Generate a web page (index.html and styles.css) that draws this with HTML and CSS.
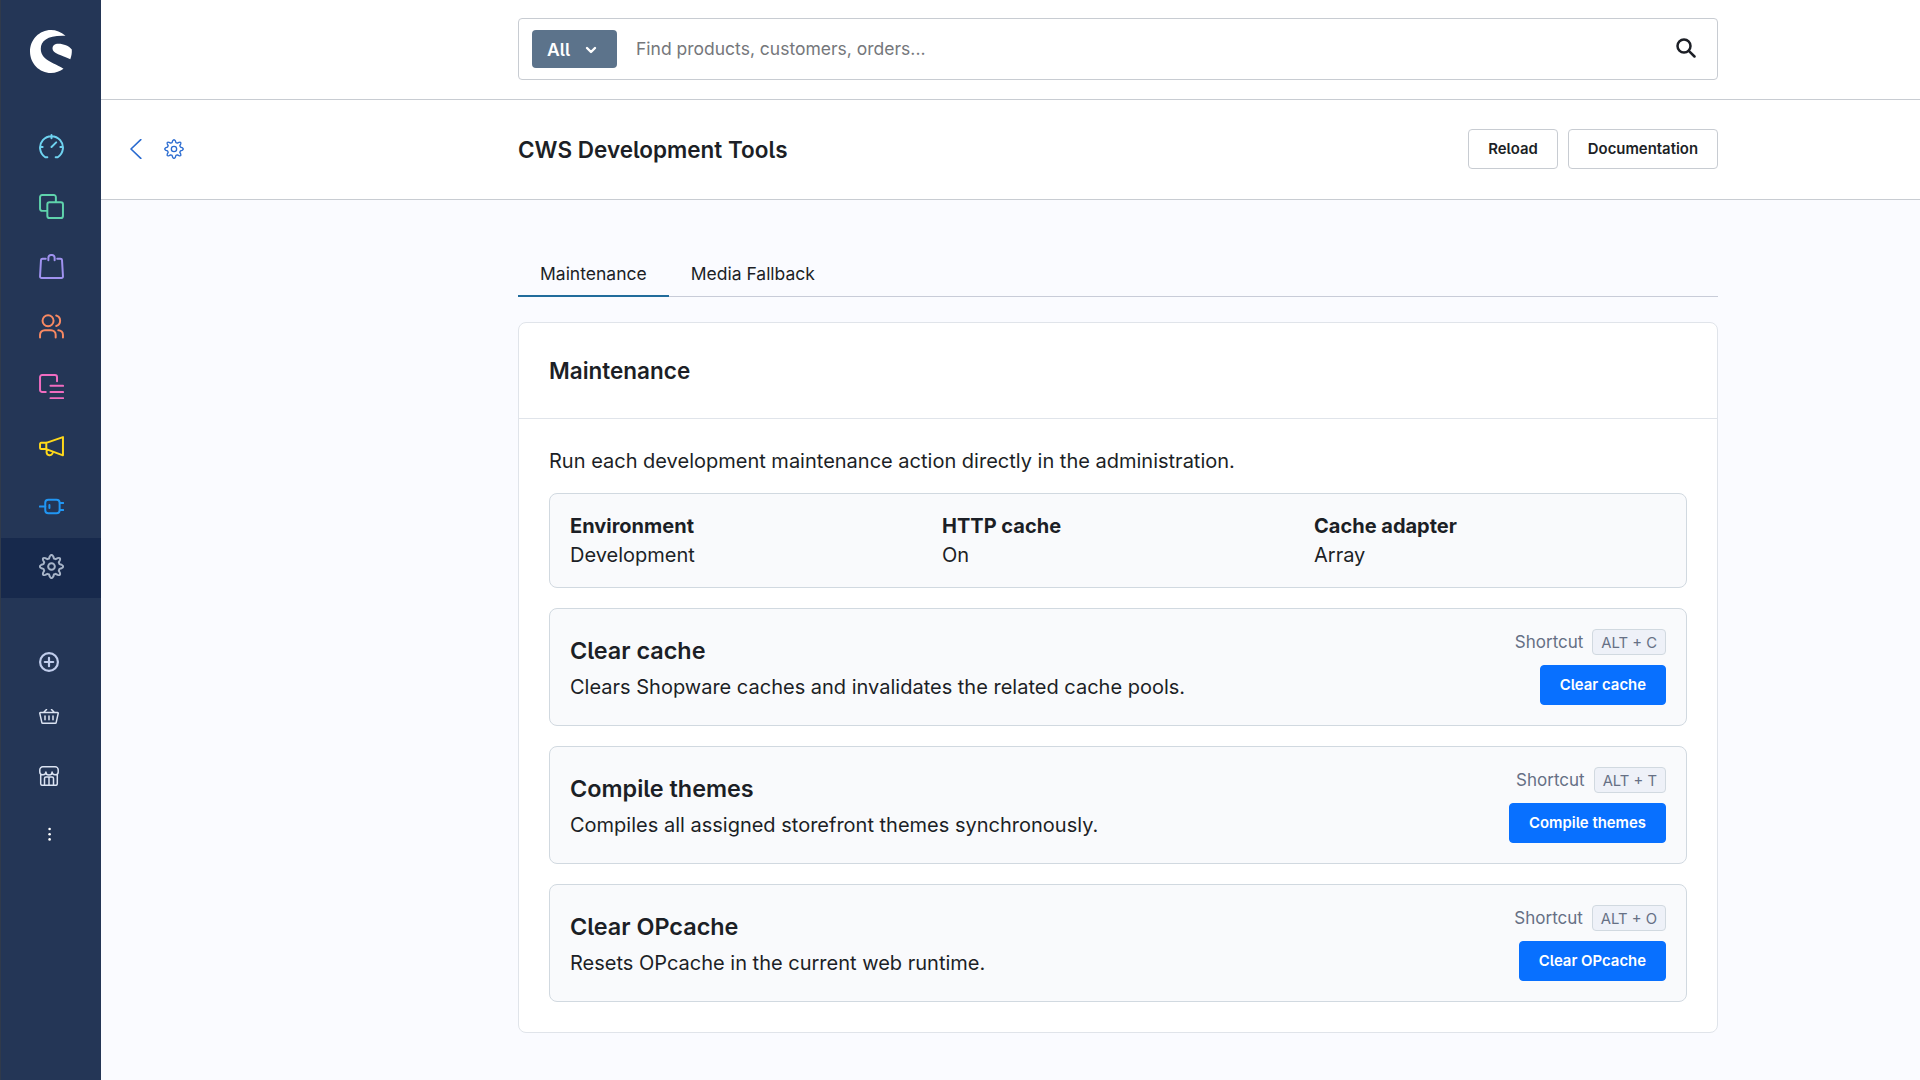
FILE: index.html
```
<!DOCTYPE html>
<html lang="en">
<head>
    <meta charset="UTF-8">
    <title>CWS Development Tools</title>
    <link rel="stylesheet" href="styles.css">
</head>
<body>

<aside class="sidebar">
    <a class="logo" href="#">
        <svg viewBox="0 0 42 43" width="42" height="43">
            <path fill="#fff" d="M35.500 5.800C31 1.800 26 0 21 0 9.500 0 0 9.500 0 21.500S9.500 43 21 43c4.700 0 9-1.500 12.500-4.200C30 36 22 33.500 17 29.800 12.500 26.500 10.800 23 10.800 18.800 10.800 10.500 18 5 35.500 5.800z"/>
            <path fill="#fff" d="M41.800 19.500C39 16 33.500 13.800 28.500 13.800c-4 0-6 2-6 4.700 0 5 9 6.500 17.800 10.700C41.500 26 42 23 41.800 19.500z"/>
        </svg>
    </a>
    <nav class="main-nav">
        <a class="nav-item" href="#">
            <svg class="icon cyan" viewBox="0 0 24 24"><path d="M8 22.300H6A11 11 0 1 1 18 22.300H16M12 1v3M1 12.500h2.500M23 12.500h-2.500M12 12.500l4.500-4.500"/></svg>
        </a>
        <a class="nav-item" href="#">
            <svg class="icon green" viewBox="0 0 24 24"><path d="M7.500 16.200H3a2 2 0 0 1-2-2V3a2 2 0 0 1 2-2h11.200a2 2 0 0 1 2 2v4.500"/><rect x="8" y="8" width="15" height="15" rx="2"/></svg>
        </a>
        <a class="nav-item" href="#">
            <svg class="icon purple" viewBox="0 0 24 24"><path d="M6.500 4.500H3.400a1.500 1.500 0 0 0-1.500 1.400L1 21.400A1.500 1.500 0 0 0 2.500 23h19a1.500 1.500 0 0 0 1.500-1.600l-.9-15.500a1.500 1.500 0 0 0-1.500-1.400H17.500M9 6V3.500A2.500 2.500 0 0 1 11.500 1h1A2.500 2.500 0 0 1 15 3.500V6"/></svg>
        </a>
        <a class="nav-item" href="#">
            <svg class="icon orange" viewBox="0 0 24 24"><circle cx="8.700" cy="6.500" r="5.300"/><path d="M1 22.500V20a4.500 4.500 0 0 1 4.500-4.500h6A4.500 4.500 0 0 1 16 20v2.500M16.500 1.500a5.200 5.200 0 0 1 0 10M18.500 15.500A4.500 4.500 0 0 1 23 20v2.500"/></svg>
        </a>
        <a class="nav-item" href="#">
            <svg class="icon pink" viewBox="0 0 24 24"><path d="M6.500 17.300H3a2 2 0 0 1-2-2V3a2 2 0 0 1 2-2h12.300a2 2 0 0 1 2 2v4M11 11.300H23.200M11 17.300H23.200M11 23.200H23.200"/></svg>
        </a>
        <a class="nav-item" href="#">
            <svg class="icon yellow" viewBox="0 0 24 24"><path d="M1 9.500a1 1 0 0 1 1-1h5v6H2a1 1 0 0 1-1-1zM7 8.500L23 3v17.500L7 14.500M7.300 14.800v3a3 3 0 0 0 5.700.800"/></svg>
        </a>
        <a class="nav-item" href="#">
            <svg class="icon blue" viewBox="0 0 24 24"><path d="M.800 12H6M20 8.700h3.300M20 15.300h3.300M10 10.500v3"/><rect x="6" y="5.500" width="13.800" height="13" rx="3"/></svg>
        </a>
        <a class="nav-item active" href="#">
            <svg class="icon grey" viewBox="0 0 24 24"><use href="#gear"/></svg>
        </a>
    </nav>
    <nav class="extra-nav">
        <a class="extra-item" href="#">
            <svg class="icon-small plus" viewBox="0 0 20 20"><circle cx="10" cy="10" r="8.900"/><path d="M10 5.800v8.400M5.800 10h8.400"/></svg>
        </a>
        <a class="extra-item" href="#">
            <svg class="icon-small" viewBox="0 0 20 20"><path d="M1.500 3.500h17a.700.700 0 0 1 .700.900l-2 9a1 1 0 0 1-1 .900H3.800a1 1 0 0 1-1-.900l-2-9a.700.700 0 0 1 .700-.900zM5 3L7.500.500M15 3L12.500.500M6 7v3.800M10 7v3.800M14 7v3.800"/></svg>
        </a>
        <a class="extra-item" href="#">
            <svg class="icon-small" viewBox="0 0 20 20"><path d="M1.700 8v9.800a1.500 1.500 0 0 0 1.500 1.500h13.600a1.500 1.500 0 0 0 1.500-1.500V8M.800 5.500V3.800A3 3 0 0 1 3.800.800h12.400a3 3 0 0 1 3 3v1.700a3 3 0 0 1-6.100.500 3.100 3.100 0 0 1-6.200 0A3 3 0 0 1 .800 5.500zM5.500 19v-6.500A1.500 1.500 0 0 1 7 11h6a1.500 1.500 0 0 1 1.500 1.500V19M10 11v8"/></svg>
        </a>
        <a class="extra-item" href="#">
            <svg class="icon-small dots" viewBox="0 0 20 20"><circle cx="10.600" cy="6" r="1.300"/><circle cx="10.600" cy="11.200" r="1.300"/><circle cx="10.600" cy="16.400" r="1.300"/></svg>
        </a>
    </nav>
</aside>

<main class="main">
    <header class="search-bar">
        <div class="search">
            <button class="search-type">All
                <svg viewBox="0 0 12 8" width="12" height="8"><path d="M2 2l4 4 4-4"/></svg>
            </button>
            <input class="search-input" type="text" placeholder="Find products, customers, orders...">
            <svg class="search-icon" viewBox="0 0 20 20" width="20" height="20"><circle cx="8" cy="8" r="6.500"/><path d="M12.800 12.800l5.700 5.700"/></svg>
        </div>
    </header>

    <div class="page-head">
        <div class="back">
            <svg viewBox="0 0 12 20" width="12" height="20"><path d="M10.800.600L1 10l9.800 9.400"/></svg>
            <svg class="gear" viewBox="0 0 24 24" width="20" height="20"><use href="#gear"/></svg>
        </div>
        <div class="page-title">
            <h1>CWS Development Tools</h1>
            <div class="page-actions">
                <button class="btn">Reload</button>
                <button class="btn">Documentation</button>
            </div>
        </div>
    </div>

    <div class="content">
        <div class="tabs">
            <a class="tab tab-active" href="#">Maintenance</a>
            <a class="tab" href="#">Media Fallback</a>
        </div>

        <section class="card">
            <div class="card-head">
                <h2>Maintenance</h2>
            </div>
            <div class="card-body">
                <p class="intro">Run each development maintenance action directly in the administration.</p>

                <div class="info">
                    <div class="info-item"><strong>Environment</strong><span>Development</span></div>
                    <div class="info-item"><strong>HTTP cache</strong><span>On</span></div>
                    <div class="info-item"><strong>Cache adapter</strong><span>Array</span></div>
                </div>

                <div class="action">
                    <div class="action-text">
                        <h3>Clear cache</h3>
                        <p>Clears Shopware caches and invalidates the related cache pools.</p>
                    </div>
                    <div class="action-side">
                        <div class="shortcut">Shortcut <kbd>ALT + C</kbd></div>
                        <button class="btn btn-primary">Clear cache</button>
                    </div>
                </div>

                <div class="action">
                    <div class="action-text">
                        <h3>Compile themes</h3>
                        <p>Compiles all assigned storefront themes synchronously.</p>
                    </div>
                    <div class="action-side">
                        <div class="shortcut">Shortcut <kbd>ALT + T</kbd></div>
                        <button class="btn btn-primary">Compile themes</button>
                    </div>
                </div>

                <div class="action">
                    <div class="action-text">
                        <h3>Clear OPcache</h3>
                        <p>Resets OPcache in the current web runtime.</p>
                    </div>
                    <div class="action-side">
                        <div class="shortcut">Shortcut <kbd>ALT + O</kbd></div>
                        <button class="btn btn-primary">Clear OPcache</button>
                    </div>
                </div>
            </div>
        </section>
    </div>
</main>

<svg class="sprite" width="0" height="0">
    <symbol id="gear" viewBox="0 0 24 24">
        <circle cx="12" cy="12" r="3.200"/>
        <path d="M10.300 2.300Q12-.600 13.700 2.300L14.300 4.300 16 5 17.900 4Q21.100 3 20 6.100L19 8 19.700 9.700 21.700 10.300Q24.600 12 21.700 13.700L19.700 14.300 19 16 20 17.900Q21.100 21 17.900 20L16 19 14.300 19.700 13.700 21.700Q12 24.600 10.300 21.700L9.700 19.700 8 19 6.100 20Q2.900 21 4 17.900L5 16 4.300 14.300 2.300 13.700Q-.600 12 2.300 10.300L4.300 9.700 5 8 4 6.100Q2.900 3 6.100 4L8 5 9.700 4.300z"/>
    </symbol>
</svg>

</body>
</html>
```
FILE: styles.css
```
* {
    box-sizing: border-box;
}

body {
    margin: 0;
    height: 1080px;
    display: flex;
    overflow: hidden;
    background: #fafbff;
    color: #1c1f26;
    font-family: Inter, sans-serif;
    font-size: 20px;
    line-height: 24px;
}

h1, h2, h3, p {
    margin: 0;
}

a {
    color: inherit;
    text-decoration: none;
}

svg {
    display: block;
    fill: none;
    stroke-linecap: round;
    stroke-linejoin: round;
}

.sprite {
    position: absolute;
}

.sidebar {
    width: 101px;
    flex: none;
    background: #243656;
    border-left: 1px solid #303a4b;
}

.logo {
    display: block;
    padding: 30px 0 0 29px;
    height: 118px;
}

.logo svg {
    stroke: none;
}

.nav-item {
    display: flex;
    align-items: center;
    justify-content: center;
    height: 60px;
    padding: 0 0 3px 1px;
}

.active {
    background: #17294c;
}

.icon {
    width: 25px;
    height: 25px;
    stroke: currentColor;
    stroke-width: 1.900;
}

.cyan { color: #6fd3f0; }
.green { color: #5fd3ac; }
.purple { color: #a092f0; }
.orange { color: #f88962; }
.pink { color: #f06cc0; }
.yellow { color: #ffd91a; }
.blue { color: #2196f3; }
.grey { color: #a7b4c8; }

.extra-nav {
    padding-top: 35.5px;
}

.extra-item {
    display: flex;
    align-items: center;
    padding-left: 38px;
    height: 57px;
}

.icon-small {
    width: 20px;
    height: 20px;
    stroke: #dbe3f2;
    stroke-width: 1.500;
}

.plus {
    stroke: #c0cdec;
    stroke-width: 2.200;
}

.dots {
    fill: #fff;
    stroke: none;
}

.main {
    flex: 1;
}

.search-bar {
    height: 100px;
    padding: 18px 0 0 417px;
    background: #fff;
    border-bottom: 1px solid #c8ccd2;
}

.search {
    display: flex;
    align-items: center;
    width: 1200px;
    height: 62px;
    padding: 0 21px 0 13px;
    border: 1px solid #c8ccd2;
    border-radius: 4px;
}

.search-type {
    display: flex;
    align-items: center;
    gap: 15px;
    width: 85px;
    height: 38px;
    padding: 0 0 0 15px;
    border: 0;
    border-radius: 4px;
    background: #5c738b;
    color: #fff;
    font: 600 17.5px Inter, sans-serif;
    font-feature-settings: "cv05";
}

.search-type svg {
    margin-top: 2px;
    stroke: #fff;
    stroke-width: 2.400;
}

.search-input {
    flex: 1;
    padding: 0 0 2px 19px;
    border: 0;
    outline: 0;
    font: 400 17.5px Inter, sans-serif;
}

.search-input::placeholder {
    color: #75777b;
}

.search-icon {
    margin-bottom: 3px;
    stroke: #1c1f26;
    stroke-width: 2.500;
}

.page-head {
    display: flex;
    align-items: center;
    height: 100px;
    padding-bottom: 1px;
    background: #fff;
    border-bottom: 1px solid #c8ccd2;
}

.back {
    display: flex;
    align-items: center;
    gap: 22px;
    width: 417px;
    padding-left: 29px;
    stroke: #2a6bd0;
    stroke-width: 1.600;
}

.page-title {
    display: flex;
    align-items: center;
    justify-content: space-between;
    width: 1200px;
}

h1, h2, h3 {
    font-size: 22.5px;
    font-weight: 600;
    line-height: 30px;
    font-feature-settings: "cv05";
}

h1 {
    padding-top: 2px;
}

h3 {
    font-size: 23.4px;
}

.page-actions {
    display: flex;
    gap: 10px;
}

.btn {
    height: 40px;
    padding: 0 19px;
    border: 1px solid #c8ccd2;
    border-radius: 4px;
    background: #fff;
    color: #1c1f26;
    font: 600 14.9px Inter, sans-serif;
    font-feature-settings: "cv05";
}

.btn-primary {
    border-color: #0870ff;
    background: #0870ff;
    color: #fff;
}

.content {
    width: 1200px;
    margin: 50px 0 0 417px;
}

.tabs {
    display: flex;
    height: 47px;
    margin-bottom: 25px;
    border-bottom: 1px solid #c8ccd8;
}

.tab {
    height: 47px;
    padding: 12px 22px 0;
    font-size: 17.5px;
}

.tab-active {
    border-bottom: 2px solid #216c9c;
}

.card {
    border: 1px solid #e0e4ea;
    border-radius: 8px;
    background: #fff;
}

.card-head {
    height: 96px;
    padding: 33px 30px 0;
    border-bottom: 1px solid #e0e4ea;
}

.card-body {
    display: grid;
    gap: 20px;
    padding: 30px;
}

.info, .action {
    padding: 20px;
    border: 1px solid #d1d9e0;
    border-radius: 8px;
    background: #f9fafc;
}

.info {
    display: grid;
    grid-template-columns: repeat(3, 1fr);
    gap: 20px;
}

.info-item {
    display: grid;
    gap: 5px;
}

.info-item strong {
    font-weight: 700;
}

.action {
    display: flex;
    align-items: center;
    justify-content: space-between;
}

.action-text {
    display: grid;
    gap: 9px;
    padding-top: 1px;
}

.action-side {
    display: grid;
    gap: 10px;
    justify-items: end;
}

.shortcut {
    display: flex;
    align-items: center;
    gap: 9px;
    height: 26px;
    color: #667085;
    font-size: 17px;
}

kbd {
    height: 26px;
    padding: 1px 8px 0;
    border: 1px solid #d1d9e0;
    border-radius: 4px;
    background: #eef1f8;
    font-family: Inter, sans-serif;
    font-size: 14.8px;
}
```
